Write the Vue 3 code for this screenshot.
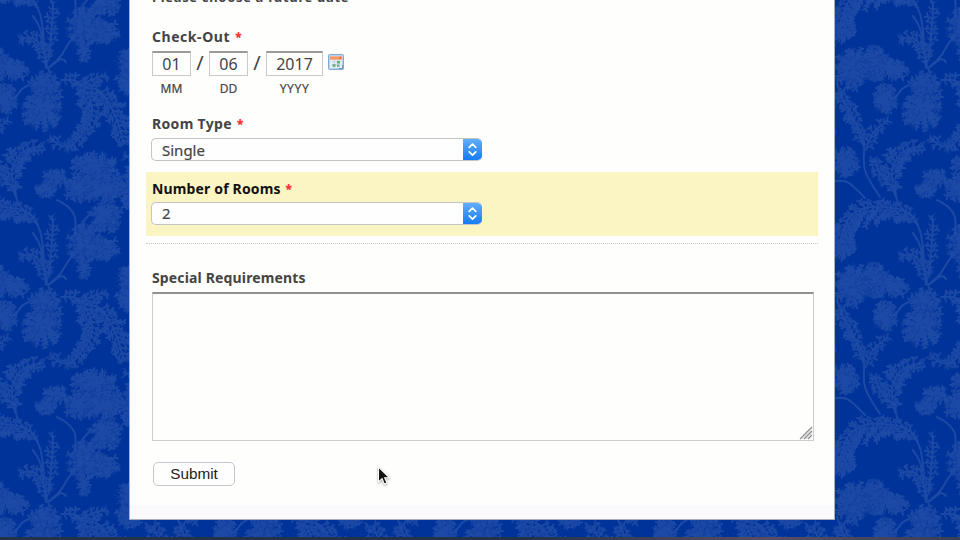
<script setup>
import { ref } from 'vue'

const month = ref('01')
const day = ref('06')
const year = ref('2017')
const roomType = ref('Single')
const rooms = ref('2')
const notes = ref('')

const TILE_W = 220
const TILE_H = 217

let seed = 71
function rnd() {
  seed = (seed * 16807) % 2147483647
  return seed / 2147483647
}
const f = (n) => n.toFixed(1)

// Samples a Catmull-Rom curve through the given points.
function sample(pts, step = 3.4) {
  const out = []
  for (let i = 0; i < pts.length - 1; i++) {
    const a = pts[Math.max(0, i - 1)]
    const b = pts[i]
    const c = pts[i + 1]
    const d = pts[Math.min(pts.length - 1, i + 2)]
    const n = Math.max(2, Math.round(Math.hypot(c[0] - b[0], c[1] - b[1]) / step))
    for (let k = 0; k < n; k++) {
      const t = k / n
      const p = [0, 1].map(
        (j) =>
          0.5 *
          (2 * b[j] +
            (c[j] - a[j]) * t +
            (2 * a[j] - 5 * b[j] + 4 * c[j] - d[j]) * t * t +
            (3 * b[j] - a[j] - 3 * c[j] + d[j]) * t * t * t)
      )
      out.push(p)
    }
  }
  out.push(pts[pts.length - 1])
  return out
}

let stems = ''
let lobes = ''
let veins = ''

function stem(pts) {
  const s = sample(pts)
  stems += 'M' + s.map((p) => f(p[0]) + ' ' + f(p[1])).join('L')
}

function lobe(x, y, ang, len) {
  const x2 = x + Math.cos(ang) * len
  const y2 = y + Math.sin(ang) * len
  lobes += `M${f(x)} ${f(y)}L${f(x2)} ${f(y2)}`
  for (let d = 3 + rnd() * 2; d < len - 1; d += 3.2 + rnd() * 1.5) {
    for (const s of [-1, 1]) {
      const bx = x + Math.cos(ang) * d
      const by = y + Math.sin(ang) * d
      const l = 2.2 + rnd() * 2.4
      lobes += `M${f(bx)} ${f(by)}l${f(Math.cos(ang + s * 0.7) * l)} ${f(Math.sin(ang + s * 0.7) * l)}`
    }
  }
}

// A feathered leaf: lobes leave both sides of a curved spine.
function frond(pts, left, right) {
  stem(pts)
  const s = sample(pts, 4.6)
  for (let i = 1; i < s.length; i++) {
    const dir = Math.atan2(s[i][1] - s[i - 1][1], s[i][0] - s[i - 1][0])
    const t = i / s.length
    const env = 0.35 + 0.65 * Math.sin(Math.PI * Math.min(1, t * 0.95 + 0.05))
    for (const [side, size] of [[-1, left], [1, right]]) {
      const len = size * env * (0.6 + rnd() * 0.5)
      const ang = dir + side * (0.95 + (rnd() - 0.5) * 0.5)
      lobe(s[i][0], s[i][1], ang, len)
      const q = rnd() * len * 0.6 + 1
      const vx = s[i][0] + Math.cos(ang + 0.2) * q
      const vy = s[i][1] + Math.sin(ang + 0.2) * q
      veins += `M${f(vx)} ${f(vy)}l${f(Math.cos(ang) * 3.5)} ${f(Math.sin(ang) * 3.5)}`
    }
  }
}

// A flower head: radiating lobes with engraved petal lines.
function bloom(cx, cy, rx, ry) {
  const n = Math.round((rx + ry) * 0.6)
  for (let i = 0; i < n; i++) {
    const a = (i / n) * Math.PI * 2 + rnd() * 0.3
    const r = 0.66 + rnd() * 0.32
    const ex = Math.cos(a) * rx * r
    const ey = Math.sin(a) * ry * r
    lobe(cx, cy, Math.atan2(ey, ex) + (rnd() - 0.5) * 0.1, Math.hypot(ex, ey))
  }
  const m = Math.round(rx * ry * 0.13)
  for (let i = 0; i < m; i++) {
    const a = rnd() * Math.PI * 2
    const r = Math.sqrt(rnd()) * 0.86
    const x = cx + Math.cos(a) * rx * r
    const y = cy + Math.sin(a) * ry * r
    const t = a + (rnd() - 0.5) * 2.2
    veins += `M${f(x)} ${f(y)}q${f(Math.cos(t) * 2)} ${f(Math.sin(t) * 2 - 1)} ${f(Math.cos(t) * 3.6)} ${f(Math.sin(t) * 3.6)}`
  }
}

frond([[38, 8], [30, -3], [12, -9], [-15, -9], [-33, 4], [-42, 34]], 27, 9)
stem([[33, 16], [41, 32], [46, 68]])
stem([[30, -3], [40, 14], [44, 40]])
frond([[47, 66], [43, 49], [33, 38], [21, 39]], 9, 9)
frond([[49, 60], [51, 35], [53, 10], [52, 0]], 6, 6)
bloom(45, 86, 18, 16)
bloom(42, 108, 22, 25)
stem([[48, 68], [60, 57], [69, 43], [80, 30]])
stem([[50, 67], [61, 59], [66, 62]])
bloom(84, 27, 19, 25)
bloom(101, 31, 20, 15)
bloom(84, 54, 6, 10)
frond([[61, 80], [78, 82], [90, 100], [91, 119], [78, 139], [68, 147]], 12, 14)
frond([[86, 88], [101, 92], [115, 115], [124, 143]], 15, 14)
frond([[78, 86], [91, 80], [105, 75]], 5, 8)
frond([[75, 146], [62, 146], [51, 139]], 6, 6)
bloom(-27, 68, 20, 23)
bloom(5, 68, 28, 13)
bloom(-5, 62, 14, 20)
bloom(5, 99, 13, 16)
bloom(132, 62, 17, 17)
bloom(129, 82, 15, 14)
stem([[15, 99], [22, 89], [33, 83]])
stem([[-43, 83], [-32, 112], [-17, 137], [-15, 170], [0, 197]])
frond([[-17, 145], [-28, 115], [-41, 93]], 10, 10)
frond([[-14, 150], [-7, 133], [7, 121]], 7, 7)
bloom(-35, 162, 15, 17)
stem([[-51, 182], [-33, 182], [-15, 198]])
frond([[15, 195], [12, 170], [23, 152], [42, 146]], 13, 14)
frond([[15, 190], [1, 175], [-5, 160]], 9, 8)
stem([[15, 186], [17, 200], [26, 213]])
bloom(46, 190, 12, 10)
bloom(55, 177, 14, 9)
stem([[57, 200], [67, 206], [75, 217], [75, 235]])
stem([[80, 237], [81, 225], [91, 213]])
bloom(94, 166, 25, 15)
bloom(78, 188, 14, 16)
bloom(104, 187, 23, 19)
bloom(105, 216, 18, 17)
bloom(133, 190, 13, 27)
frond([[146, 140], [135, 155], [126, 157]], 7, 7)
bloom(168, 27, 20, 22)
frond([[155, 165], [165, 125], [153, 93]], 14, 14)

const offsets = []
for (const x of [-TILE_W, 0, TILE_W]) for (const y of [-TILE_H, 0, TILE_H]) offsets.push({ x, y })
</script>

<template>
  <div class="page">
    <svg class="wallpaper" width="960" height="540" aria-hidden="true">
      <defs>
        <g id="foliage" fill="none" stroke-linecap="round" stroke-linejoin="round">
          <path :d="stems" stroke="#1c49a5" stroke-width="1.9" />
          <path :d="lobes" stroke="#1c49a5" stroke-width="1.8" />
          <path :d="veins" stroke="#0c3d9f" stroke-width="0.9" />
        </g>
        <pattern id="damask" width="220" height="217" patternUnits="userSpaceOnUse">
          <rect width="220" height="217" fill="#003399" />
          <use v-for="(o, i) in offsets" :key="i" href="#foliage" :x="o.x" :y="o.y" />
        </pattern>
      </defs>
      <rect width="960" height="540" fill="url(#damask)" />
    </svg>

    <form class="sheet" @submit.prevent>
      <p class="hint">Please choose a future date</p>

      <div class="field checkout">
        <label class="label t-out">Check-Out <b>*</b></label>
        <div class="date">
          <div class="part"><input v-model="month" class="box" /><span>MM</span></div>
          <i>/</i>
          <div class="part"><input v-model="day" class="box" /><span>DD</span></div>
          <i>/</i>
          <div class="part year"><input v-model="year" class="box" /><span>YYYY</span></div>
          <svg class="calendar" width="16" height="16" viewBox="0 0 16 16">
            <rect x=".5" y=".5" width="15" height="15" rx="1" fill="#b9d5ef" stroke="#7fa8d2" />
            <rect x="2" y="2" width="12" height="12" fill="#e4eef5" />
            <rect x="2" y="2.3" width="12" height="3.4" fill="#f79764" />
            <path d="M11 4.5l2-2v2z" fill="#d9512c" />
            <path d="M4 7.5h9M4 10.5h9M6.5 6v8M10 6v8" stroke="#c6d9e7" />
            <path d="M9 7h3v2.5H9zM4.5 10.2h3v2.5h-3zM9 10.8h2.5v2H9z" fill="#67aa78" />
            <path d="M11 14.5h3.5V11" fill="none" stroke="#6895c5" />
          </svg>
        </div>
      </div>

      <div class="field room">
        <label class="label t-room">Room Type <b>*</b></label>
        <div class="select">
          <span>{{ roomType }}</span>
          <svg width="19" height="23" viewBox="0 0 19 23"><path d="M6.2 9.3L9.5 6l3.3 3.3M6.2 13.8l3.3 3.3 3.3-3.3" /></svg>
        </div>
      </div>

      <div class="field count">
        <label class="label t-count">Number of Rooms <b>*</b></label>
        <div class="select">
          <span>{{ rooms }}</span>
          <svg width="19" height="23" viewBox="0 0 19 23"><path d="M6.2 9.3L9.5 6l3.3 3.3M6.2 13.8l3.3 3.3 3.3-3.3" /></svg>
        </div>
      </div>

      <div class="rule"></div>

      <div class="field special">
        <label class="label t-special">Special Requirements</label>
        <div class="area">
          <textarea v-model="notes"></textarea>
          <svg class="grip" width="14" height="14" viewBox="0 0 14 14">
            <path d="M1 13L13 1M5 13l8-8M9 13l4-4" stroke="#8e8e8e" stroke-width="1.3" />
            <path d="M3 13L13 3M7 13l6-6" stroke="#dedede" />
          </svg>
        </div>
      </div>

      <button class="submit" type="submit">Submit</button>
    </form>

    <div class="desk"></div>

    <svg class="cursor" width="16" height="22" viewBox="0 0 16 22">
      <path d="M1.5 1v15l3.6-3.3 2.3 5.4 2.6-1.1-2.3-5.2h4.8z" fill="#111" stroke="#fff" stroke-width="1.1" />
    </svg>
  </div>
</template>

<style>
body { margin: 0; overflow: hidden; }
</style>

<style scoped>
* { box-sizing: border-box; }
.page {
  position: relative;
  width: 960px;
  height: 540px;
  overflow: hidden;
  display: flex;
  flex-direction: column;
  align-items: center;
  justify-content: space-between;
  background: #003399;
  font-family: "Noto Sans", "Open Sans", sans-serif;
  color: #444;
}
.wallpaper { position: absolute; inset: 0; }
.sheet {
  position: relative;
  width: 706px;
  height: 520px;
  margin-left: 4px;
  border: 1px solid #a9afc1;
  border-top: 0;
  background: linear-gradient(#fefefd 0 505px, #fafafc 505px);
  display: flex;
  flex-direction: column;
  padding: 0 16px;
}
.hint {
  margin: -13px 0 0 6px;
  height: 20px;
  font-size: 13px;
  line-height: 20px;
  font-weight: 700;
  letter-spacing: .67px;
  white-space: nowrap;
}
.field { padding: 0 6px; }
.label {
  display: block;
  font-size: 14px;
  line-height: 20px;
  font-weight: 700;
  white-space: nowrap;
}
.t-out { letter-spacing: .55px; }
.t-room { letter-spacing: .33px; }
.t-count { letter-spacing: .15px; }
.t-special { letter-spacing: .15px; }
.label b { position: relative; top: -1px; color: #f33; margin-left: 1px; font-size: 12px; line-height: 1; }
.checkout { height: 87px; padding-top: 20px; }
.date { display: flex; margin-top: 4px; }
.part { width: 39px; display: flex; flex-direction: column; align-items: center; }
.part.year { width: 57px; }
.box {
  width: 100%;
  height: 25px;
  padding: 0;
  border: 1px solid #c9c9ce;
  border-top: 2px solid #9b9b9b;
  background: #fefefd;
  color: #444;
  font: 16px/20px "Noto Sans", sans-serif;
  text-align: center;
}
.part span { font-size: 12px; line-height: 18px; margin-top: 4px; -webkit-text-stroke: .2px #444; }
.part.year span { letter-spacing: .6px; }
.date i { width: 18px; text-align: center; font: 20px/24px "Noto Sans", sans-serif; }
.calendar { margin: 3px 0 0 5px; }
.room { margin-top: 20px; height: 58px; }
.select {
  display: flex;
  align-items: stretch;
  justify-content: space-between;
  width: 331px;
  height: 23px;
  margin: 4px 0 0 -1px;
  border: 1px solid #c3c3c8;
  border-right: 0;
  border-radius: 5px;
  background: #fefefe;
  overflow: hidden;
}
.select span { padding-left: 10px; font-size: 15px; line-height: 23px; -webkit-text-stroke: .2px #444; }
.count .select span { line-height: 21px; }
.select svg {
  margin: -1px 0;
  background: linear-gradient(#65b0fa, #1279f8);
  fill: none;
  stroke: #fff;
  stroke-width: 1.7;
  stroke-linecap: round;
  stroke-linejoin: round;
}
.count { height: 64px; padding-top: 7px; background: #fbf5c3; color: #111; }
.count .select { margin-top: 3px; color: #444; }
.rule { height: 8px; border-bottom: 1px dotted #c5c5cc; }
.special { padding-top: 24px; }
.area { position: relative; width: 662px; height: 149px; margin-top: 4px; }
textarea {
  display: block;
  width: 100%;
  height: 100%;
  border: 1px solid #cbcbd0;
  border-top: 2px solid #929292;
  background: #fefefd;
  resize: none;
}
.grip { position: absolute; right: 1px; bottom: 1px; }
.submit {
  width: 82px;
  height: 24px;
  margin: 21px 0 0 7px;
  padding: 0;
  border: 1px solid #c6c6cb;
  border-radius: 5px;
  background: #fefefe;
  color: #222;
  font: 15.3px/22px "Liberation Sans", sans-serif;
}
.desk { position: relative; width: 100%; height: 3px; background: linear-gradient(90deg, #243447 0 55%, #584d60 80%, #374153); }
.cursor { position: absolute; left: 377px; top: 466px; filter: drop-shadow(0 1px 1px rgba(0, 0, 0, .35)); }
</style>
